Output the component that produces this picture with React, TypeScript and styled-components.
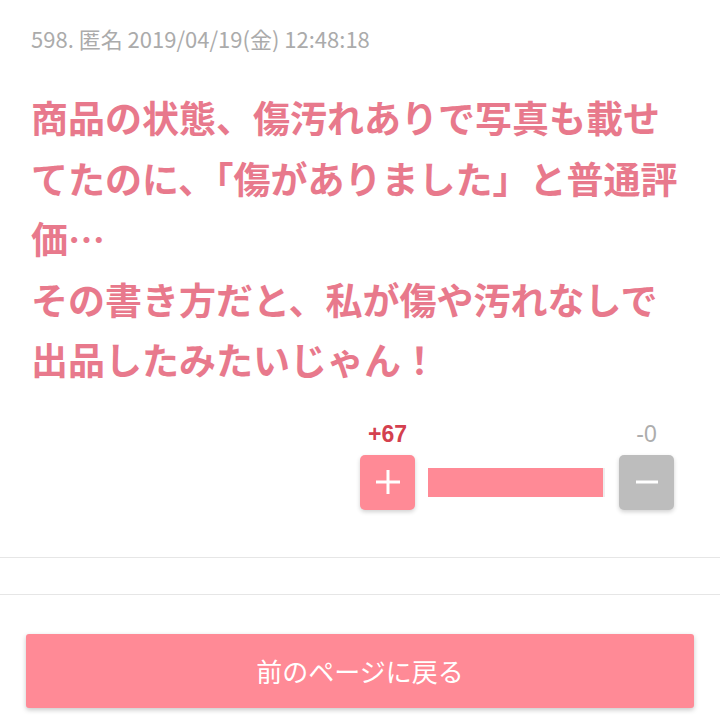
import React from 'react';
import styled, { createGlobalStyle } from 'styled-components';

const GlobalStyle = createGlobalStyle`
	html, body {
		margin: 0;
		padding: 0;
		background: #ffffff;
	}
	body {
		font-family: "Noto Sans CJK JP", "Noto Sans", sans-serif;
	}
`;

const Page = styled.div`
	width: 720px;
	min-height: 720px;
	background: #ffffff;
	overflow: hidden;
`;

const Post = styled.article`
	padding: 23px 31px 47px 31px;
`;

const Meta = styled.div`
	font-size: 22px;
	line-height: 30px;
	color: #ababab;
	font-weight: 400;
`;

const Body = styled.p`
	margin: 34px 0 0 0;
	font-size: 37px;
	line-height: 60.6px;
	font-weight: 700;
	color: #e8798c;
	white-space: pre-wrap;
	word-break: break-all;
`;

const Votes = styled.div`
	display: flex;
	justify-content: flex-end;
	align-items: flex-end;
	margin-top: 31px;
	padding-right: 15px;
`;

const VoteColumn = styled.div`
	display: flex;
	flex-direction: column;
	align-items: center;
`;

const VoteCount = styled.span<{ $active: boolean }>`
	font-family: "Liberation Sans", Arial, sans-serif;
	font-size: 23px;
	line-height: 26px;
	margin-bottom: 8px;
	font-weight: ${(p) => (p.$active ? 700 : 400)};
	color: ${(p) => (p.$active ? '#d4404f' : '#adadad')};
`;

const VoteButton = styled.button<{ $tone: 'plus' | 'minus' }>`
	width: 55px;
	height: 55px;
	border: none;
	border-radius: 5px;
	padding: 0;
	display: flex;
	align-items: center;
	justify-content: center;
	background: ${(p) => (p.$tone === 'plus' ? '#ff8a96' : '#bdbdbd')};
	box-shadow: 0 2px 4px rgba(0, 0, 0, 0.18);
	cursor: pointer;
`;

const BarTrack = styled.div`
	width: 177px;
	height: 29px;
	margin: 0 14px 13px 13px;
	background: #eeeeee;
	display: flex;
`;

const BarFill = styled.div`
	height: 100%;
	background: #ff8a96;
`;

const Divider = styled.div`
	height: 36px;
	border-top: 1px solid #e6e6e6;
	border-bottom: 1px solid #e6e6e6;
`;

const Footer = styled.div`
	padding: 39px 26px 12px 26px;
`;

const BackButton = styled.button`
	width: 100%;
	height: 74px;
	border: none;
	border-radius: 3px;
	background: #ff8a96;
	color: #ffffff;
	font-family: "Noto Sans CJK JP", "Noto Sans", sans-serif;
	font-size: 26px;
	font-weight: 400;
	box-shadow: 0 2px 5px rgba(0, 0, 0, 0.22);
	cursor: pointer;
`;

const PlusIcon = () => (
	<svg width="26" height="26" viewBox="0 0 26 26">
		<rect x="11.5" y="1" width="3" height="24" fill="#ffffff" />
		<rect x="1" y="11.5" width="24" height="3" fill="#ffffff" />
	</svg>
);

const MinusIcon = () => (
	<svg width="24" height="26" viewBox="0 0 24 26">
		<rect x="1" y="11.5" width="22" height="3" fill="#ffffff" />
	</svg>
);

const text =
	'商品の状態、傷汚れありで写真も載せてたのに、「傷がありました」と普通評価…\nその書き方だと、私が傷や汚れなしで出品したみたいじゃん！';

const App: React.FC = () => {
	const plus = 67;
	const minus = 0;
	const ratio = plus + minus === 0 ? 0 : plus / (plus + minus);

	return (
		<Page>
			<GlobalStyle />
			<Post>
				<Meta>598. 匿名 2019/04/19(金) 12:48:18</Meta>
				<Body>{text}</Body>
				<Votes>
					<VoteColumn>
						<VoteCount $active>+{plus}</VoteCount>
						<VoteButton $tone="plus" aria-label="plus">
							<PlusIcon />
						</VoteButton>
					</VoteColumn>
					<BarTrack>
						<BarFill style={{ width: `${ratio * 100 - 1}%` }} />
					</BarTrack>
					<VoteColumn>
						<VoteCount $active={false}>-{minus}</VoteCount>
						<VoteButton $tone="minus" aria-label="minus">
							<MinusIcon />
						</VoteButton>
					</VoteColumn>
				</Votes>
			</Post>
			<Divider />
			<Footer>
				<BackButton>前のページに戻る</BackButton>
			</Footer>
		</Page>
	);
};

export default App;
